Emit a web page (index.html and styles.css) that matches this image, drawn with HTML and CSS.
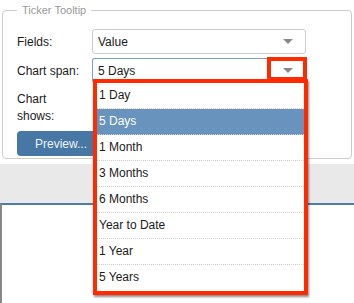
FILE: index.html
```html
<!DOCTYPE html>
<html lang="en">
<head>
    <meta charset="utf-8">
    <title>Ticker Tooltip</title>
    <link rel="stylesheet" href="styles.css">
</head>

<body>
    <div class="settings">
        <fieldset class="group">
            <legend>Ticker Tooltip</legend>
            <div class="row">
                <label>Fields:</label>
                <div class="select"><span>Value</span><i class="caret"></i></div>
            </div>
            <div class="row">
                <label>Chart span:</label>
                <div class="select focused"><span>5 Days</span><i class="caret"></i></div>
            </div>
            <div class="row tall">
                <label>Chart<br>shows:</label>
                <div></div>
            </div>
            <button class="btn">Preview...</button>
        </fieldset>

        <!-- open list of the chart span select -->
        <ul class="menu">
            <li>1 Day</li>
            <li class="active">5 Days</li>
            <li>1 Month</li>
            <li>3 Months</li>
            <li>6 Months</li>
            <li>Year to Date</li>
            <li>1 Year</li>
            <li>5 Years</li>
        </ul>
        <div class="mark"></div>
    </div>

    <div class="strip"></div>
    <div class="canvas"></div>
</body>
</html>
```

FILE: styles.css
```css
*{margin:0; padding:0; box-sizing:border-box;}
body{
    font:12px "Liberation Sans", Arial, sans-serif;
    color:#1a1a1a;
    background:#fff;
    width:354px; height:303px;
    overflow:hidden;
}
.settings{
    position:relative;
    padding:4px 2px 0;
    height:164px;
}
.group{
    border:1px solid #ccc;
    border-radius:4px;
    padding:13px 14px 2px;
    height:155px;
}
.group legend{
    font-size:11px;
    color:#999;
    padding:0 5px;
}
.row{
    display:grid;
    grid-template-columns:75px 214px;
    align-items:center;
    margin-bottom:4px;
}
.row.tall{
    align-items:start;
    height:40px;
    line-height:17px;
    padding-top:4px;
}
.select{
    height:25px;
    border:1px solid #ccc;
    border-radius:3px;
    display:flex;
    align-items:center;
    justify-content:space-between;
    padding:0 12px 0 5px;
}
.select.focused{
    border-color:#7aa0c8 #ccc #ccc #7aa0c8;
}
.caret{
    width:0; height:0;
    border-left:5px solid transparent;
    border-right:5px solid transparent;
    border-top:5px solid #888;
}
.btn{
    width:90px; height:25px;
    border:0;
    border-radius:4px;
    background:#4677a5;
    color:#eef3f8;
    font:12px "Liberation Sans", Arial, sans-serif;
    text-align:left;
    padding-left:18px;
}
.menu{
    position:absolute;
    left:93px; top:79px;
    width:215px;
    list-style:none;
    background:#fff;
    border:4px solid #ff2a00;
    box-shadow:1px 2px 2px rgba(0,0,0,.45);
}
.menu li{
    height:26px;
    line-height:25px;
    padding-left:2px;
    border-bottom:1px dotted #ccc;
}
.menu li:last-child{border-bottom:0;}
.menu li.active{
    background:#6893bd;
    color:#fff;
}
.mark{
    position:absolute;
    left:267px; top:57px;
    width:40px; height:24px;
    border:4px solid #ff2a00;
}
.strip{
    height:39px;
    background:#e9e9e9;
}
.canvas{
    height:100px;
    border-top:2px solid #4a7dab;
    border-left:2px solid #888;
}
```
